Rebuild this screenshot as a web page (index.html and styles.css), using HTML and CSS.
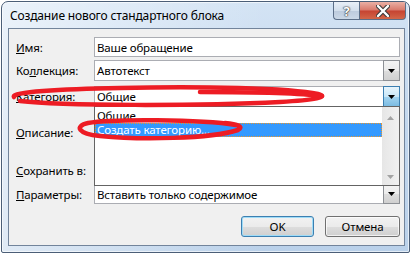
FILE: index.html
```html
<!DOCTYPE html>
<html lang="ru">
<head>
  <meta charset="UTF-8" />
  <title>Создание нового стандартного блока</title>
  <link rel="stylesheet" href="styles.css">
</head>
<body>

<div class="window">
  <!-- Title bar -->
  <div class="titlebar">
    <span class="title">Создание нового стандартного блока</span>
    <div class="caption-buttons">
      <div class="cap-btn help">?</div>
      <div class="cap-btn close">
        <svg viewBox="0 0 14 12" width="14" height="12">
          <path d="M2 1 L12 11 M12 1 L2 11" stroke="#3b3b3b" stroke-width="4.4" stroke-linecap="round" />
          <path d="M2 1 L12 11 M12 1 L2 11" stroke="#fff" stroke-width="2.4" stroke-linecap="round" />
        </svg>
      </div>
    </div>
  </div>

  <!-- Dialog body -->
  <div class="client">
    <div class="row">
      <label><u>И</u>мя:</label>
      <div class="field"><span class="value">Ваше обращение</span></div>
    </div>

    <div class="row row-21">
      <label>Ко<u>л</u>лекция:</label>
      <div class="field combo">
        <span class="value">Автотекст</span>
        <span class="drop"><svg viewBox="0 0 7 4" width="7" height="4"><polygon points="0,0 7,0 3.5,4" fill="#000" /></svg></span>
      </div>
    </div>

    <div class="row row-21 gap-5">
      <label><u>К</u>атегория:</label>
      <div class="field combo open">
        <span class="value">Общие</span>
        <span class="drop hot"><svg viewBox="0 0 7 4" width="7" height="4"><polygon points="0,0 7,0 3.5,4" fill="#000" /></svg></span>

        <!-- opened dropdown list -->
        <div class="dropdown-list">
          <div class="items">
            <div class="item">Общие</div>
            <div class="item selected">Создать категорию...</div>
          </div>
          <div class="scroll">
            <svg viewBox="0 0 7 4" width="7" height="4"><polygon points="0,4 7,4 3.5,0" fill="#a3a3a3" /></svg>
            <svg viewBox="0 0 7 4" width="7" height="4"><polygon points="0,0 7,0 3.5,4" fill="#a3a3a3" /></svg>
          </div>
        </div>
      </div>
    </div>

    <div class="row row-desc">
      <label><u>О</u>писание:</label>
      <div class="field"></div>
    </div>

    <div class="row row-21 gap-7">
      <label><u>С</u>охранить в:</label>
      <div class="field combo">
        <span class="value"></span>
        <span class="drop"><svg viewBox="0 0 7 4" width="7" height="4"><polygon points="0,0 7,0 3.5,4" fill="#000" /></svg></span>
      </div>
    </div>

    <div class="row">
      <label><u>П</u>араметры:</label>
      <div class="field combo">
        <span class="value">Вставить только содержимое</span>
        <span class="drop"><svg viewBox="0 0 7 4" width="7" height="4"><polygon points="0,0 7,0 3.5,4" fill="#000" /></svg></span>
      </div>
    </div>

    <div class="buttons">
      <button class="btn default">OK</button>
      <button class="btn">Отмена</button>
    </div>
  </div>
</div>

<!-- red marker scribbles drawn over the screenshot -->
<svg class="marks" viewBox="0 0 412 254" width="412" height="254">
  <path d="M20 101 C60 106, 200 106, 280 102 C315 100, 330 97, 318 94 C290 88, 200 86, 120 88 C60 89, 10 92, 14 97" />
  <path d="M200 92 C250 92, 300 93, 322 96" />
  <path d="M236 125 C200 119, 110 119, 88 123 C74 126, 78 134, 100 136 C140 140, 210 139, 238 130 C244 127, 238 124, 225 123" />
</svg>

</body>
</html>
```

FILE: styles.css
```css
body {
  margin: 0;
  background: #fff;
  font-family: 'Noto Sans', 'Segoe UI', sans-serif;
  font-size: 11.5px;
  letter-spacing: -0.15px;
  color: #000;
}

.window {
  box-sizing: border-box;
  width: 409px;
  height: 252px;
  margin: 1px 0 0 1px;
  border: 1px solid #4b5e77;
  border-radius: 7px 7px 2px 2px;
  background:
    linear-gradient(90deg, rgba(255, 255, 255, 0.55), rgba(255, 255, 255, 0) 65%),
    linear-gradient(180deg, #d3e3f4 0%, #c2d7ee 50%, #bad1ea 100%);
  box-shadow: inset 0 0 0 1px rgba(255, 255, 255, 0.6);
  display: flex;
  flex-direction: column;
  overflow: hidden;
}

/* title bar */
.titlebar {
  height: 26px;
  display: flex;
  justify-content: space-between;
  align-items: flex-start;
  padding: 0 3px 0 8px;
}

.title {
  font-size: 12px;
  line-height: 16px;
  padding-top: 6px;
  white-space: nowrap;
}

.caption-buttons {
  display: flex;
}

.cap-btn {
  height: 17px;
  display: flex;
  align-items: center;
  justify-content: center;
  border: 1px solid #5c6f88;
  border-top: none;
}

.help {
  width: 25px;
  border-right: none;
  border-radius: 0 0 0 4px;
  background: linear-gradient(180deg, #e8eff7 0%, #d3dfec 50%, #bccbdd 52%, #cbd8e7 100%);
  color: #fff;
  font-weight: bold;
  font-size: 13px;
  text-shadow: 0 0 1px #333, 0 0 1px #333, 0 0 2px #444;
}

.close {
  width: 45px;
  border-radius: 0 0 4px 0;
  background: linear-gradient(180deg, #eab0a5 0%, #d9796b 48%, #c64331 52%, #d26648 100%);
}

/* dialog body */
.client {
  box-sizing: border-box;
  height: 218px;
  margin: 0 4px 0 6px;
  border: 1px solid #72849b;
  background: #f0f0f0;
  padding: 8px 4px 8px 7px;
  display: flex;
  flex-direction: column;
}

.row {
  display: flex;
  height: 20px;
  margin-top: 3px;
}

.row:first-child {
  margin-top: 0;
}

.row-21 {
  height: 21px;
}

.gap-5 {
  margin-top: 5px;
}

.gap-7 {
  margin-top: 7px;
}

.row-desc {
  height: 42px;
  margin-top: 4px;
}

label {
  width: 78px;
  display: flex;
  align-items: center;
}

.field {
  box-sizing: border-box;
  width: 306px;
  border: 1px solid #abadb3;
  background: #fff;
  display: flex;
  align-items: center;
  position: relative;
}

.value {
  flex: 1;
  padding-left: 2px;
  white-space: nowrap;
}

.drop {
  box-sizing: border-box;
  width: 17px;
  align-self: stretch;
  margin: -1px -1px -1px 0;
  border: 1px solid #8d9095;
  background: linear-gradient(180deg, #f4f4f4 0%, #ebebeb 50%, #dddddd 51%, #d0d0d0 100%);
  display: flex;
  align-items: center;
  justify-content: center;
}

.drop.hot {
  border-color: #3c7fb1;
  background: linear-gradient(180deg, #e8f5fc 0%, #c9e7f8 50%, #a3d4f0 51%, #7cbce2 100%);
}

/* open list of the category combo */
.dropdown-list {
  position: absolute;
  top: 100%;
  left: -1px;
  box-sizing: border-box;
  width: 306px;
  height: 80px;
  border: 1px solid #646464;
  background: #fff;
  display: flex;
  z-index: 2;
}

.items {
  flex: 1;
  padding-top: 2px;
}

.item {
  height: 14px;
  line-height: 14px;
  padding-left: 2px;
}

.item.selected {
  background: #3399ff;
  color: #fff;
  outline: 1px dotted #e9962d;
  outline-offset: -1px;
}

.scroll {
  width: 17px;
  background: linear-gradient(90deg, #e6e6e6, #f1f1f1);
  display: flex;
  flex-direction: column;
  justify-content: space-between;
  align-items: center;
  padding: 9px 0 6px;
  box-sizing: border-box;
}

/* buttons */
.buttons {
  display: flex;
  justify-content: flex-end;
  gap: 11px;
  margin-top: 12px;
}

.btn {
  height: 21px;
  width: 73px;
  padding: 0;
  font-family: inherit;
  font-size: 11.5px;
  letter-spacing: inherit;
  color: #000;
  border: 1px solid #707070;
  border-radius: 3px;
  background: linear-gradient(180deg, #f2f2f2 0%, #ebebeb 50%, #dddddd 51%, #cfcfcf 100%);
  box-shadow: inset 0 0 0 1px rgba(255, 255, 255, 0.7);
}

.btn + .btn {
  width: 75px;
}

.btn.default {
  border-color: #3c7fb1;
  box-shadow: inset 0 0 0 1px #9fdcf7;
}

.marks {
  position: absolute;
  top: 0;
  left: 0;
  z-index: 10;
  pointer-events: none;
}

.marks path {
  fill: none;
  stroke: #ed1c24;
  stroke-width: 4.5;
  stroke-linecap: round;
}
```
